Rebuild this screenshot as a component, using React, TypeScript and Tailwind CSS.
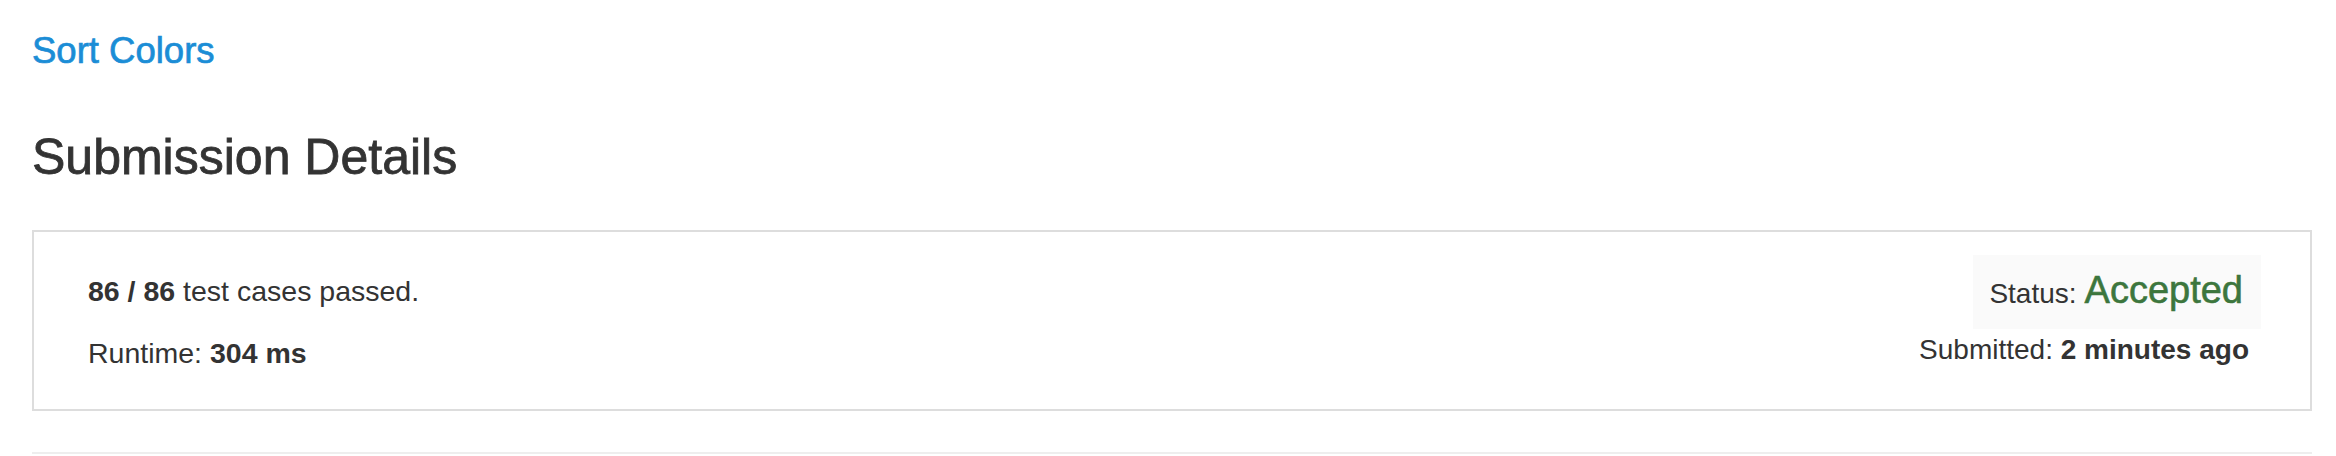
export default function App() {
  return (
    <main className="w-[2336px] h-[456px] bg-white pl-[32px] pr-[24px] font-['Liberation_Sans',Arial,sans-serif] text-[#333]">
      <div className="pt-[31px]">
        <a href="#" className="block text-[36.5px] leading-[40px] text-[#1b8dd6] [-webkit-text-stroke:0.7px]">
          Sort Colors
        </a>
      </div>
      <h3 className="mt-[58px] text-[50px] leading-[56px] [-webkit-text-stroke:0.8px]">Submission Details</h3>
      <section className="mt-[45px] h-[181px] border-2 border-[#ddd] flex justify-between pl-[54px] pr-[61px] text-[28px] leading-[32px]">
        <div className="flex flex-col gap-[30px] pt-[43px] text-[28.5px]">
          <div>
            <b>86 / 86</b> test cases passed.
          </div>
          <div>
            Runtime: <b>304 ms</b>
          </div>
        </div>
        <div className="flex flex-col items-end pt-[23px]">
          <div className="flex items-baseline gap-[8px] bg-[#fafafa] pl-[16px] pr-[18px] pt-[15px] pb-[19px] mr-[-12px]">
            <span>Status:</span>
            <span className="text-[38px] leading-[40px] text-[#3c763d] [-webkit-text-stroke:0.6px]">Accepted</span>
          </div>
          <div className="mt-[5px]">
            Submitted: <b>2 minutes ago</b>
          </div>
        </div>
      </section>
      <div className="mt-[41px] h-[2px] bg-[#eee]" />
    </main>
  );
}
